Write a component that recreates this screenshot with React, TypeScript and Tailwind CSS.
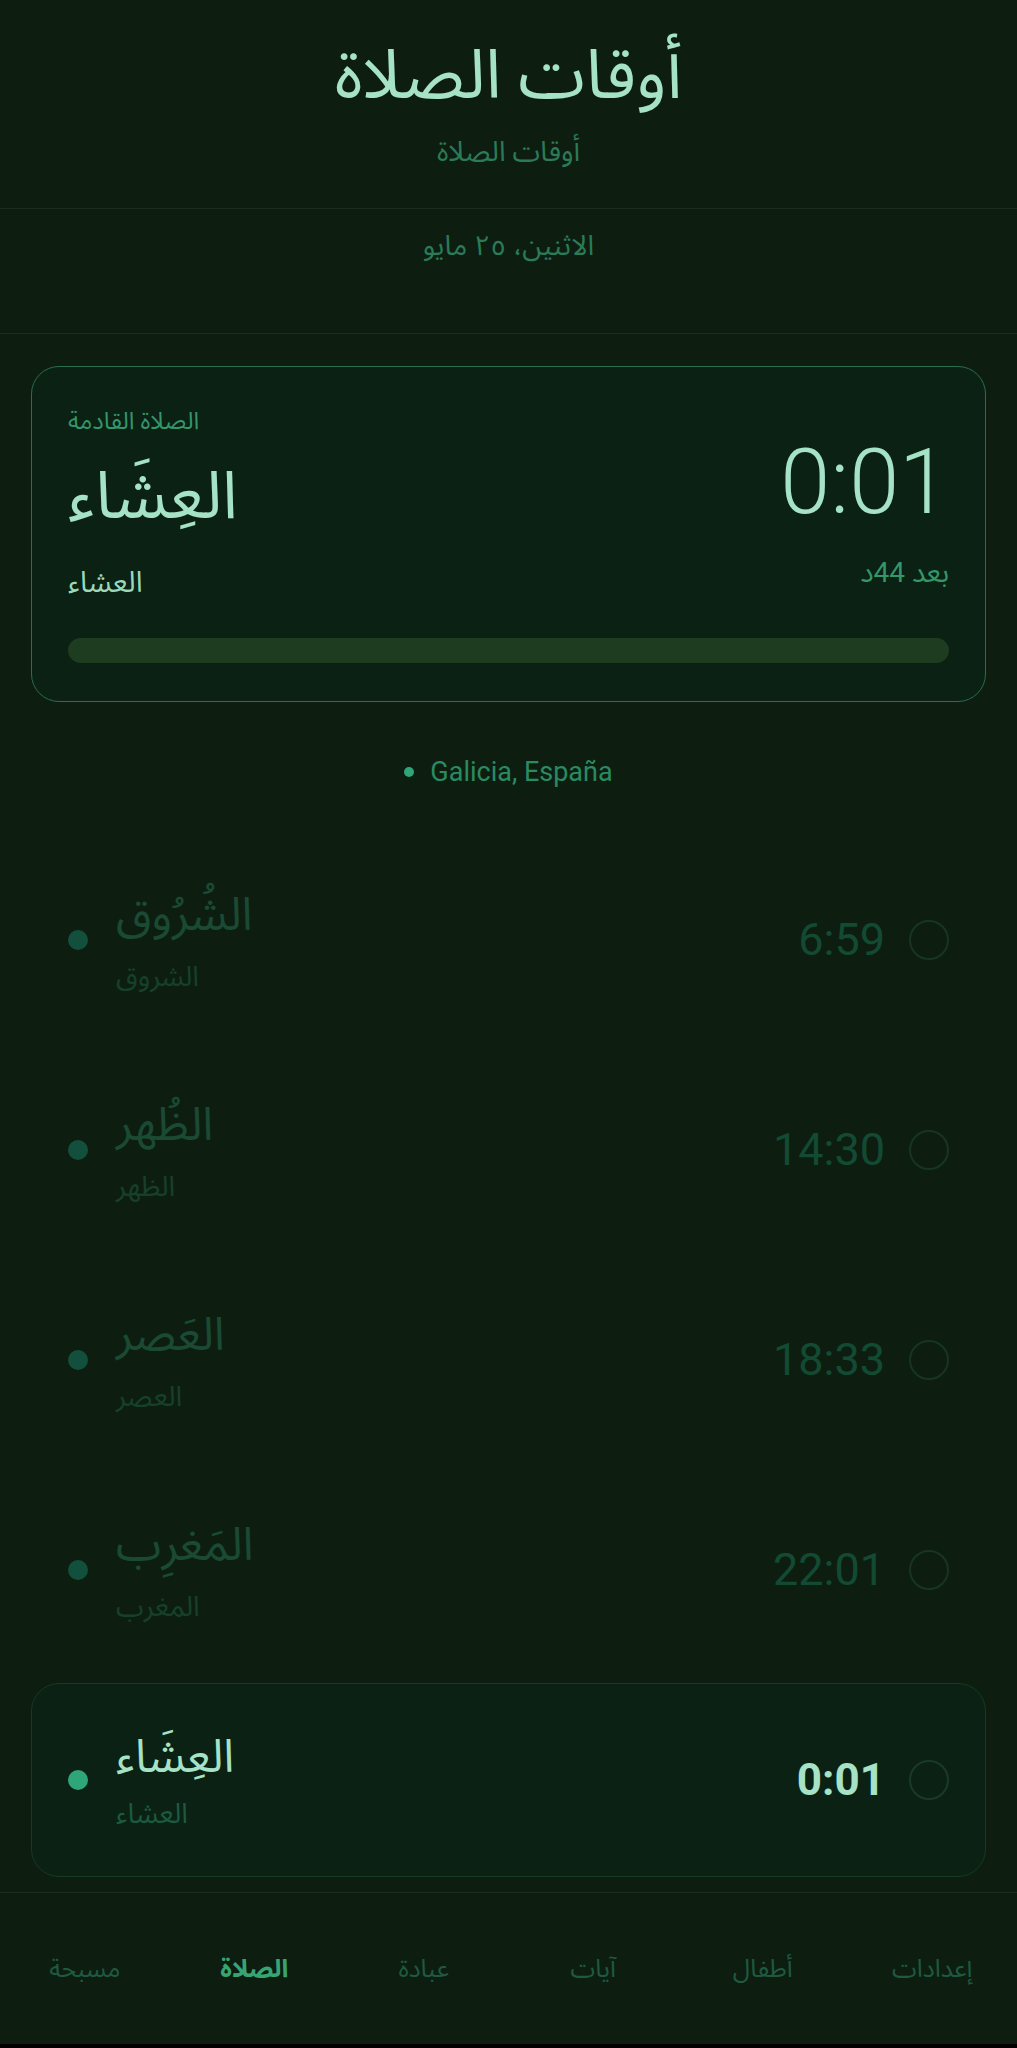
import React from "react";

const FONT = 'Roboto, "Noto Sans Arabic", "Noto Naskh Arabic", "DejaVu Sans", sans-serif';

type Row = { name: string; sub: string; time: string; current?: boolean };

const rows: Row[] = [
  { name: "الشُرُوق", sub: "الشروق", time: "6:59" },
  { name: "الظُهر", sub: "الظهر", time: "14:30" },
  { name: "العَصر", sub: "العصر", time: "18:33" },
  { name: "المَغرِب", sub: "المغرب", time: "22:01" },
  { name: "العِشَاء", sub: "العشاء", time: "0:01", current: true },
];

const nav = [
  { label: "مسبحة" },
  { label: "الصلاة", active: true },
  { label: "عبادة" },
  { label: "آيات" },
  { label: "أطفال" },
  { label: "إعدادات" },
];

function PrayerRow({ r }: { r: Row }) {
  if (r.current) {
    return (
      <div className="h-[194px] rounded-[28px] border border-[#173a24] bg-[#0a2114] flex items-center px-[36px]">
        <div className="w-5 h-5 rounded-full bg-[#2fa57a] shrink-0" />
        <div className="ml-[28px] flex flex-col">
          <div className="text-[46px] leading-[60px] text-[#a6e2c5]">{r.name}</div>
          <div className="mt-[8px] text-[28px] leading-[40px] text-[#1c5a40]">{r.sub}</div>
        </div>
        <div className="ml-auto text-[44px] leading-[50px] font-bold text-[#a6e2c5]">{r.time}</div>
        <div className="ml-[24px] w-10 h-10 rounded-full border-2 border-[#1a3a25] shrink-0" />
      </div>
    );
  }
  return (
    <div className="h-[194px] rounded-[28px] border border-transparent flex items-center px-[36px]">
      <div className="w-5 h-5 rounded-full bg-[#12503d] shrink-0" />
      <div className="ml-[28px] flex flex-col">
        <div className="text-[46px] leading-[60px] text-[#1a4a33]">{r.name}</div>
        <div className="mt-[13px] text-[28px] leading-[40px] text-[#17402c]">{r.sub}</div>
      </div>
      <div className="ml-auto text-[45px] leading-[50px] text-[#134a33]">{r.time}</div>
      <div className="ml-[24px] w-10 h-10 rounded-full border-2 border-[#18351f] shrink-0" />
    </div>
  );
}

export default function App() {
  return (
    <div className="min-h-screen bg-[#0d1e11] flex flex-col" style={{ fontFamily: FONT }}>
      <header className="h-[209px] border-b border-[#1a2e1d] flex flex-col items-center pt-[30px]">
        <h1 className="text-[68px] leading-[90px] text-[#a6e2c5]">أوقات الصلاة</h1>
        <div className="mt-[14px] text-[28px] leading-[36px] text-[#2b7a58]">أوقات الصلاة</div>
      </header>
      <div className="h-[125px] border-b border-[#1a2e1d] flex justify-center pt-[22px]">
        <div className="text-[28px] leading-[30px] text-[#2b7a58]">الاثنين، ٢٥ مايو</div>
      </div>

      <main className="px-[31px] pt-[32px] flex flex-col">
        <section className="h-[336px] rounded-[28px] border border-[#2b6e4f] bg-[#0a2114] px-[36px] pt-[38px] flex flex-col">
          <div className="flex justify-between">
            <div className="flex flex-col">
              <div className="text-[24px] leading-[32px] text-[#349669]">الصلاة القادمة</div>
              <div className="mt-[19px] text-[66px] leading-[80px] text-[#a6e2c5]">العِشَاء</div>
              <div className="mt-[28px] text-[29px] leading-[36px] text-[#9ad8ba]">العشاء</div>
            </div>
            <div className="flex flex-col items-end">
              <div className="mt-[33px] text-[90px] leading-[90px] font-light text-[#a6e2c5]">0:01</div>
              <div className="mt-[27px] text-[28px] leading-[36px] text-[#349669]">بعد 44د</div>
            </div>
          </div>
          <div className="mt-auto mb-[38px] h-[25px] rounded-full bg-[#1e3c20]" />
        </section>

        <div className="mt-[55px] flex items-center justify-center gap-[16px]">
          <div className="w-[10px] h-[10px] rounded-full bg-[#2fa57a]" />
          <div className="text-[27px] leading-[30px] text-[#2a8a62]">Galicia, España</div>
        </div>

        <div className="mt-[56px] flex flex-col gap-[16px]">
          {rows.map((r) => (
            <PrayerRow key={r.sub} r={r} />
          ))}
        </div>
      </main>

      <nav className="mt-[15px] h-[152px] border-t border-[#1a2e1d] flex items-center">
        {nav.map((n) => (
          <div
            key={n.label}
            className={
              n.active
                ? "flex-1 text-center text-[25px] font-bold text-[#37a573]"
                : "flex-1 text-center text-[25px] text-[#1e5a41]"
            }
          >
            {n.label}
          </div>
        ))}
      </nav>
      <div className="h-[6px] bg-black" />
    </div>
  );
}
